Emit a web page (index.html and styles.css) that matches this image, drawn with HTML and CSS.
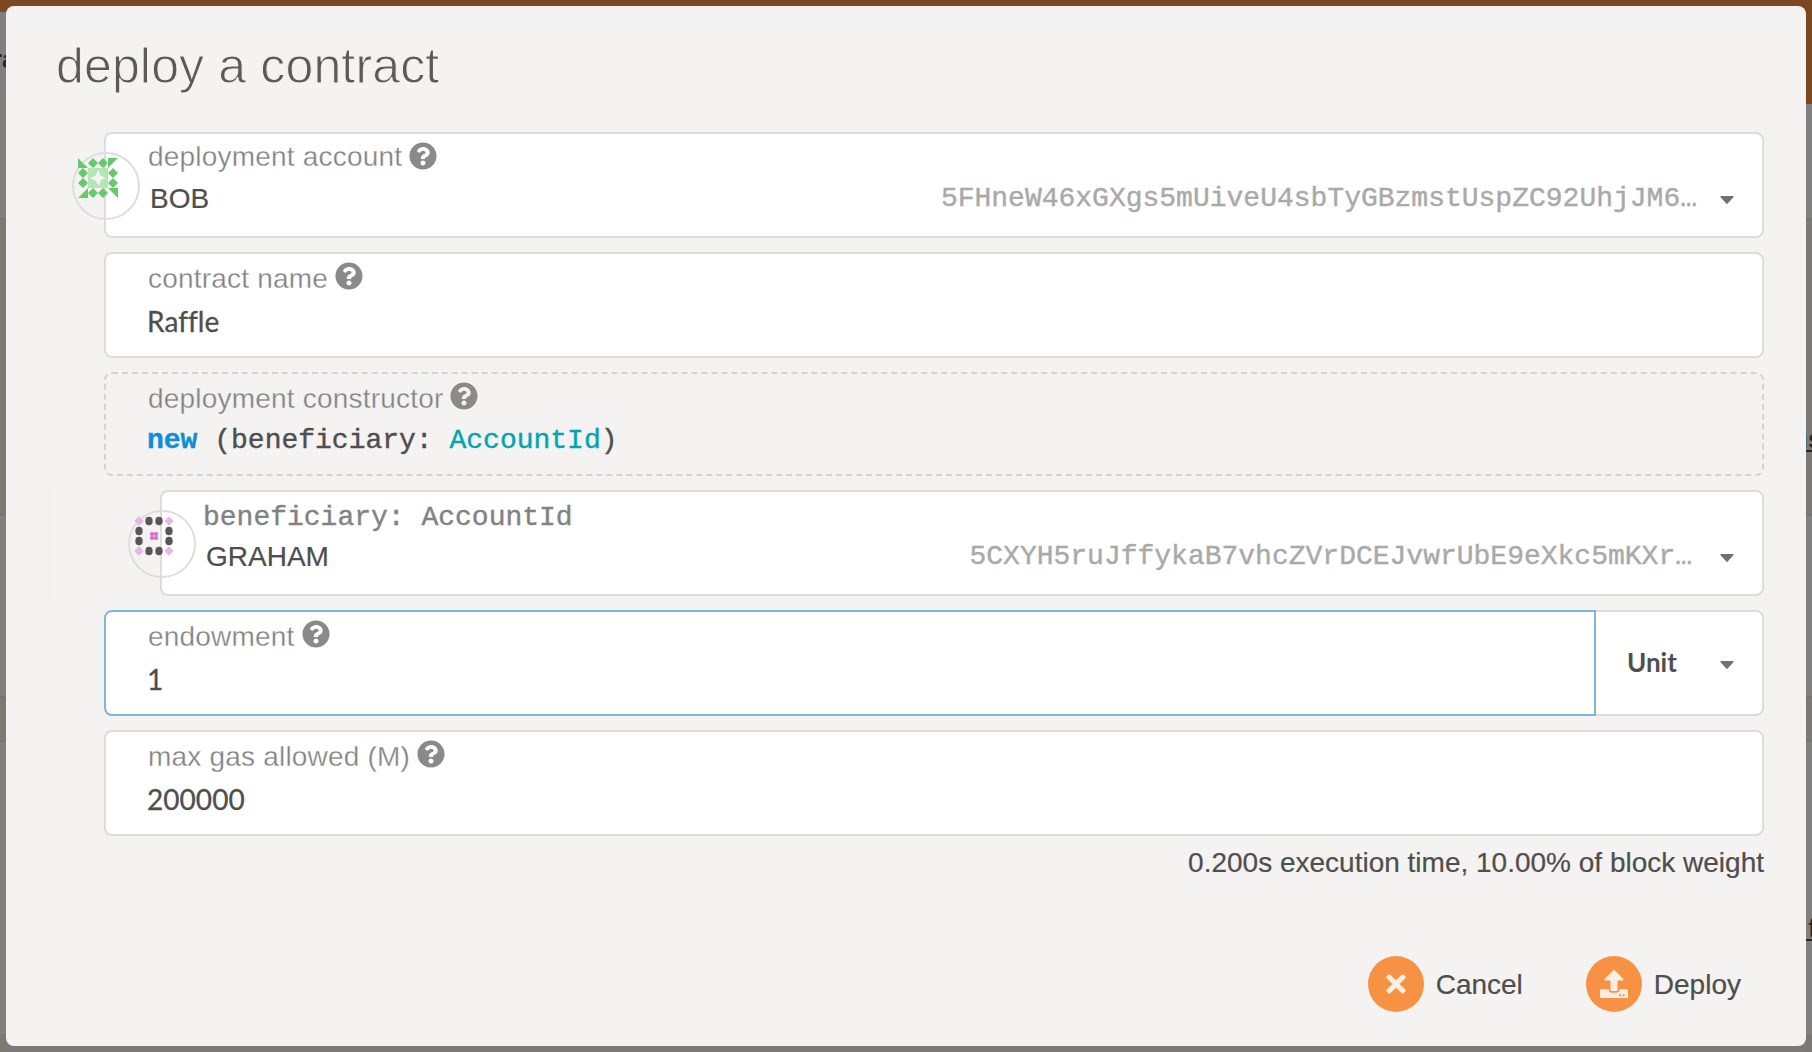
FILE: index.html
```html
<!DOCTYPE html>
<html lang="en">
<head>
<meta charset="utf-8">
<title>deploy a contract</title>
<link rel="stylesheet" href="styles.css">
</head>
<body>
<svg class="defs" width="0" height="0" aria-hidden="true">
  <symbol id="help" viewBox="0 0 512 512"><path d="M504 256c0 136.997-111.043 248-248 248S8 392.997 8 256C8 119.083 119.043 8 256 8s248 111.083 248 248zM262.655 90c-54.497 0-89.255 22.957-116.549 63.758-3.536 5.286-2.353 12.415 2.715 16.258l34.699 26.31c5.205 3.947 12.621 3.008 16.665-2.122 17.864-22.658 30.113-35.797 57.303-35.797 20.429 0 45.698 13.148 45.698 32.958 0 14.976-12.363 22.667-32.534 33.976C247.128 238.528 216 254.941 216 296v4c0 6.627 5.373 12 12 12h56c6.627 0 12-5.373 12-12v-1.333c0-28.462 83.186-29.647 83.186-106.667 0-58.002-60.165-102-116.531-102zM256 338c-25.365 0-46 20.635-46 46 0 25.364 20.635 46 46 46s46-20.636 46-46c0-25.364-20.635-46-46-46z"/></symbol>
  <symbol id="times" viewBox="0 0 352 512"><path d="M242.72 256l100.07-100.07c12.28-12.28 12.28-32.19 0-44.48l-22.24-22.24c-12.28-12.28-32.19-12.28-44.48 0L176 189.28 75.93 89.21c-12.28-12.28-32.19-12.28-44.48 0L9.21 111.45c-12.28 12.28-12.28 32.19 0 44.48L109.28 256 9.21 356.07c-12.28 12.28-12.28 32.19 0 44.48l22.24 22.24c12.28 12.28 32.2 12.28 44.48 0L176 322.72l100.07 100.07c12.28 12.28 32.2 12.28 44.48 0l22.24-22.24c12.28-12.28 12.28-32.19 0-44.48L242.72 256z"/></symbol>
  <symbol id="upload" viewBox="0 0 512 512"><path d="M296 384h-80c-13.3 0-24-10.7-24-24V192h-87.7c-17.8 0-26.7-21.5-14.1-34.1L242.3 5.7c7.5-7.5 19.8-7.5 27.3 0l152.2 152.2c12.6 12.6 3.7 34.1-14.1 34.1H320v168c0 13.3-10.7 24-24 24zm216-8v112c0 13.3-10.7 24-24 24H24c-13.3 0-24-10.7-24-24V376c0-13.3 10.7-24 24-24h136v8c0 30.9 25.1 56 56 56h80c30.9 0 56-25.1 56-56v-8h136c13.3 0 24 10.7 24 24zm-124 88c0-11-9-20-20-20s-20 9-20 20 9 20 20 20 20-9 20-20zm64 0c0-11-9-20-20-20s-20 9-20 20 9 20 20 20 20-9 20-20z"/></symbol>
  <symbol id="caret" viewBox="0 0 14 8"><path d="M1 0h12q1 .4.4 1.3L7.7 7.6q-.7.6-1.4 0L.6 1.3Q0 .4 1 0z"/></symbol>
</svg>

<div class="page">
  <div class="strip strip-left">
    <div class="band band-bar"></div>
    <div class="band band-top"><span class="peek peek-tab">ra</span></div>
    <div class="band band-shade"></div>
    <div class="band band-row"></div>
    <div class="band band-gap"></div>
    <div class="band band-list"></div>
    <div class="band band-end"></div>
  </div>
  <div class="strip strip-right">
    <div class="band band-bar"></div>
    <div class="band band-top"></div>
    <div class="band band-shade"><span class="peek peek-link">us</span></div>
    <div class="band band-row"></div>
    <div class="band band-gap"></div>
    <div class="band band-list"><span class="peek peek-item">&nbsp;f</span></div>
    <div class="band band-end"></div>
  </div>
</div>

<main class="modal">
  <h1 class="title">deploy a contract</h1>
  <div class="fields">
    <section class="field">
      <svg class="identicon" viewBox="0 0 68 68">
        <circle cx="34" cy="34" r="33" fill="none" stroke="#ddd" stroke-width="2"/>
        <g transform="translate(6 6)" fill="#67c96c">
          <path d="M0 0l10 10H0zM30 0h10L30 10zM0 40l10-10v10zM30 30h10v10z"/>
          <path d="M15 0l5 5-5 5-5-5zM25 0l5 5-5 5-5-5zM15 30l5 5-5 5-5-5zM25 30l5 5-5 5-5-5zM5 10l5 5-5 5-5-5zM5 20l5 5-5 5-5-5zM35 10l5 5-5 5-5-5zM35 20l5 5-5 5-5-5z"/>
          <path d="M10 10h20v20H10z" fill="#b5e4b5"/>
          <path d="M20.3 11.8l2.2 5.6 5.2 2.3-5 2.6-1.6 6-3.2-5.2-5.6-2.8 5.2-2.8z" fill="#f4f3f1"/>
        </g>
      </svg>
      <div class="label"><span class="label-text">deployment account</span><svg class="help"><use href="#help"/></svg></div>
      <div class="account"><span class="name">BOB</span><span class="address">5FHneW46xGXgs5mUiveU4sbTyGBzmstUspZC92UhjJM6…</span><svg class="caret"><use href="#caret"/></svg></div>
    </section>

    <section class="field input">
      <div class="label"><span class="label-text">contract name</span><svg class="help"><use href="#help"/></svg></div>
      <div class="value">Raffle</div>
    </section>

    <section class="field input static">
      <div class="label"><span class="label-text">deployment constructor</span><svg class="help"><use href="#help"/></svg></div>
      <div class="code"><b class="keyword">new</b> (beneficiary: <span class="type">AccountId</span>)</div>
    </section>

    <section class="field param">
      <svg class="identicon" viewBox="0 0 68 68">
        <circle cx="34" cy="34" r="33" fill="none" stroke="#ddd" stroke-width="2"/>
        <g transform="translate(6 6)" fill="#575757">
          <path d="M5 .3L9.7 5 5 9.7.3 5zM35 .3L39.7 5 35 9.7 30.3 5zM5 30.3L9.7 35 5 39.7.3 35zM35 30.3l4.7 4.7-4.7 4.7-4.7-4.7z" fill="#e8b6e6"/>
          <ellipse cx="15" cy="5" rx="3.7" ry="4.3"/><ellipse cx="25" cy="5" rx="3.7" ry="4.3"/>
          <ellipse cx="15" cy="35" rx="3.7" ry="4.3"/><ellipse cx="25" cy="35" rx="3.7" ry="4.3"/>
          <ellipse cx="5" cy="15" rx="3.7" ry="4.3"/><ellipse cx="5" cy="25" rx="3.7" ry="4.3"/>
          <ellipse cx="35" cy="15" rx="3.7" ry="4.3"/><ellipse cx="35" cy="25" rx="3.7" ry="4.3"/>
          <path d="M18 16v8M22 16v8M16 18h8M16 22h8" stroke="#d478ce" stroke-width="2.7"/>
        </g>
      </svg>
      <div class="label"><span class="label-text mono">beneficiary: AccountId</span></div>
      <div class="account"><span class="name">GRAHAM</span><span class="address wide-gap">5CXYH5ruJffykaB7vhcZVrDCEJvwrUbE9eXkc5mKXr…</span><svg class="caret"><use href="#caret"/></svg></div>
    </section>

    <div class="joined">
      <section class="field input active">
        <div class="label"><span class="label-text">endowment</span><svg class="help"><use href="#help"/></svg></div>
        <div class="value">1</div>
      </section>
      <div class="unit"><span class="unit-name">Unit</span><svg class="caret"><use href="#caret"/></svg></div>
    </div>

    <section class="field input">
      <div class="label"><span class="label-text">max gas allowed (M)</span><svg class="help"><use href="#help"/></svg></div>
      <div class="value">200000</div>
    </section>
  </div>
  <p class="weight">0.200s execution time, 10.00% of block weight</p>
  <div class="actions">
    <div class="button cancel"><span class="disc"><svg class="glyph"><use href="#times"/></svg></span><span class="caption">Cancel</span></div>
    <div class="button"><span class="disc"><svg class="glyph"><use href="#upload"/></svg></span><span class="caption">Deploy</span></div>
  </div>
</main>
</body>
</html>
```
FILE: styles.css
```css
* { box-sizing: border-box; }
body {
  margin: 0;
  width: 1812px;
  height: 1052px;
  overflow: hidden;
  position: relative;
  background: #7b7a79;
  color: #4e4e4e;
  font: 28px/48px "Liberation Sans", Arial, sans-serif;
}
.defs { position: absolute; }

/* dimmed page behind the dialog */
.page { display: flex; justify-content: space-between; height: 1052px; background: linear-gradient(#7c4822 0 12px, #7b7a79 12px); }
.strip { width: 6px; display: flex; flex-direction: column; }
.band { overflow: hidden; flex: none; background: #808080; }
.band-bar { height: 12px; background: #7c4822; }
.strip-right .band-bar { height: 104px; }
.band-top { height: 206px; }
.strip-right .band-top { height: 114px; }
.band-shade { height: 298px; background: #7a7976; border-top: 2px solid #747474; border-bottom: 2px solid #747474; }
.band-row { height: 180px; }
.band-gap { height: 46px; background: #7a7976; border-top: 2px solid #747474; border-bottom: 2px solid #747474; }
.band-list { height: 292px; }
.band-end { height: 18px; background: #7a7976; }
.peek { display: block; color: #272727; font-size: 26px; line-height: 30px; white-space: nowrap; }
.peek-tab { margin: 32px 0 0 -8px; font-weight: bold; }
.peek-link { margin: 204px 0 0 -14px; font-weight: bold; text-decoration: underline; }
.peek-item { margin: 171px 0 0 -5px; text-decoration: underline; }

.modal {
  position: absolute;
  inset: 6px;
  padding: 20px 42px 0 98px;
  border-radius: 8px;
  background: #f4f3f1;
}
.title {
  margin: 0 0 24px -48px;
  height: 82px;
  font-size: 50px;
  font-weight: normal;
  line-height: 81px;
  letter-spacing: .15px;
  color: #5a5a58;
  -webkit-text-stroke: 1px #f4f3f1;
}
.fields { display: flex; flex-direction: column; gap: 14px; }
.field {
  position: relative;
  height: 106px;
  padding: 4px 28px 0 41px;
  border: 2px solid #ddd;
  border-radius: 8px;
  background: #fff;
}
.label { display: flex; align-items: center; height: 36px; line-height: 36px; color: #828282; }
.label-text { padding: 2px 0 0 1px; letter-spacing: .2px; -webkit-text-stroke: .3px #fff; white-space: nowrap; }
.input .label-text { padding-top: 6px; }
.help { width: 28px; height: 28px; margin-left: 7px; fill: #8a8a8a; }
.mono, .address, .code { font-family: "Liberation Mono", "Courier New", monospace; -webkit-text-stroke: .4px; }
.mono { padding: 7px 0 0; letter-spacing: 0; }
.account { display: flex; align-items: center; height: 48px; padding-left: 3px; }
.name { padding-top: 1px; -webkit-text-stroke: .2px; }
.address { margin-left: auto; padding-top: 2px; color: #a9a9a9; }
.wide-gap { margin-right: 5px; }
.caret { width: 14px; height: 8px; margin: 3px 0 0 23px; fill: #717171; flex: none; }
.value { padding-top: 3px; font-family: Lato, sans-serif; -webkit-text-stroke: .3px; letter-spacing: .05px; }
.static { height: 104px; border: 2px dashed #d5d4d2; background: transparent; }
.static .label-text { -webkit-text-stroke-color: #f4f3f1; }
.code { padding-top: 3px; white-space: pre; }
.keyword { color: #0e8ed8; }
.type { color: #00a5b2; }
.param { margin-left: 56px; }
.param::before {
  content: "";
  position: absolute;
  left: -114px;
  top: -10px;
  width: 5px;
  height: 122px;
  background: #f1f1f2;
}
.identicon { position: absolute; left: -34px; top: 18px; width: 68px; height: 68px; }

.joined { display: flex; }
.active { flex: 1; border-color: #7fb6d8; border-radius: 8px 0 0 8px; }
.unit {
  width: 168px;
  height: 106px;
  padding: 0 28px 0 31px;
  display: flex;
  align-items: center;
  justify-content: space-between;
  border: 2px solid #ddd;
  border-left: 0;
  border-radius: 0 8px 8px 0;
  background: #fff;
  font: bold 26px/48px Lato, sans-serif;
}
.unit-name { padding-bottom: 3px; }

.weight { margin: 3px 0 0; text-align: right; -webkit-text-stroke: .2px; }
.actions { display: flex; justify-content: flex-end; gap: 63px; margin-top: 69px; padding-right: 23px; }
.button { display: flex; align-items: center; gap: 12px; }
.caption { padding-top: 2px; -webkit-text-stroke: .2px; }
.disc { width: 56px; height: 56px; border-radius: 50%; background: #f79244; display: flex; align-items: center; justify-content: center; }
.glyph { width: 28px; height: 28px; fill: #fdeee1; }
```
